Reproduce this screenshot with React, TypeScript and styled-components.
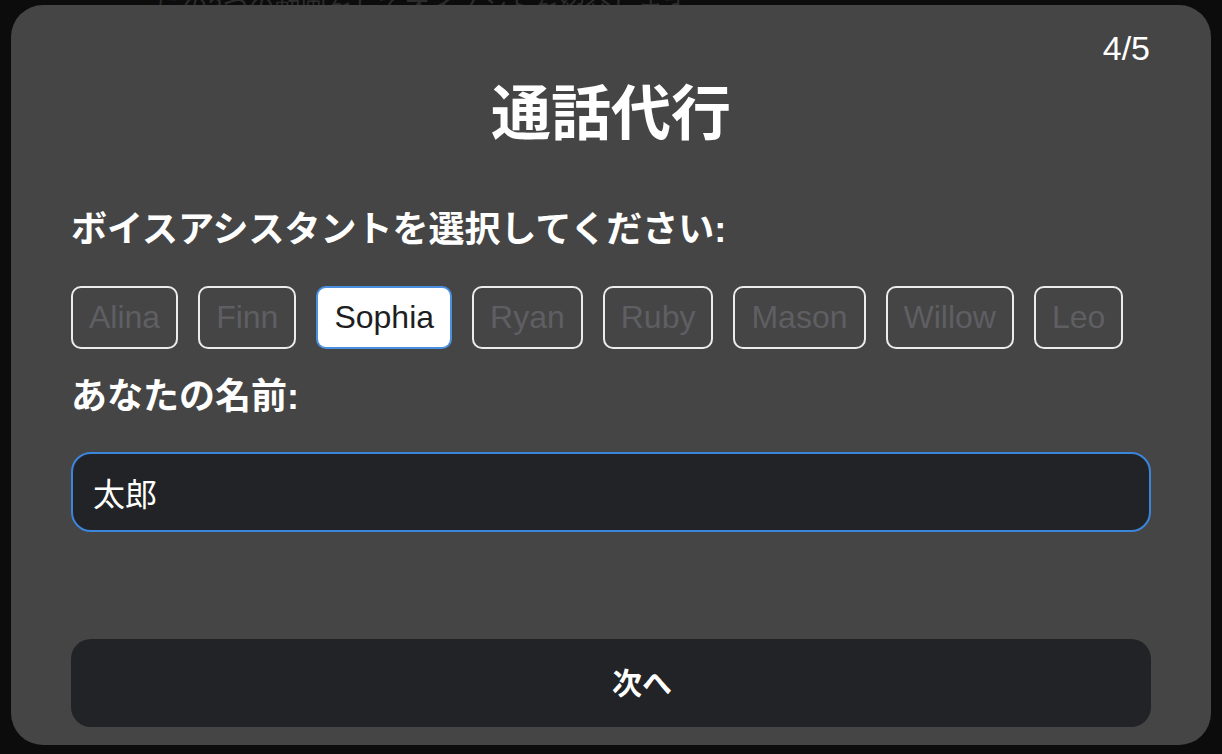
import React, { useState } from 'react';
import styled, { createGlobalStyle } from 'styled-components';

const GlobalStyle = createGlobalStyle`
  html, body {
    margin: 0;
    padding: 0;
    background: #0c0c0c;
  }
  * {
    box-sizing: border-box;
  }
`;

const fontStack = `"Liberation Sans", "Noto Sans CJK JP", sans-serif`;

const Page = styled.div`
  position: relative;
  width: 1222px;
  height: 754px;
  overflow: hidden;
  background: #0c0c0c;
  font-family: ${fontStack};
`;

// faint text of the page behind the dialog
const BackdropText = styled.div`
  position: absolute;
  top: -14px;
  left: 130px;
  font-size: 26px;
  color: #2c2c2c;
  white-space: nowrap;
`;

const Modal = styled.div`
  position: absolute;
  top: 5px;
  left: 11px;
  width: 1200px;
  height: 740px;
  background: #454545;
  border-radius: 32px;
  padding: 75px 60px 18px;
  display: flex;
  flex-direction: column;
  color: #ffffff;
`;

const Counter = styled.div`
  position: absolute;
  top: 24px;
  right: 61px;
  font-size: 34px;
  line-height: 38px;
`;

const Title = styled.h1`
  margin: 0;
  font-size: 60px;
  line-height: 70px;
  font-weight: 700;
  text-align: center;
`;

const Label = styled.label<{ $gap: number }>`
  display: block;
  margin-top: ${({ $gap }) => $gap}px;
  font-size: 36px;
  line-height: 40px;
  font-weight: 700;
`;

const ChipRow = styled.div`
  display: flex;
  gap: 20px;
  margin-top: 36px;
`;

const Chip = styled.button<{ $active: boolean }>`
  font-family: ${fontStack};
  font-size: 32px;
  line-height: 37px;
  padding: 11px 16px;
  border-radius: 10px;
  border: 2px solid ${({ $active }) => ($active ? '#4a8fe0' : '#ececec')};
  background: ${({ $active }) => ($active ? '#ffffff' : 'transparent')};
  color: ${({ $active }) => ($active ? '#1e1e1e' : '#5f5f63')};
  cursor: pointer;
`;

const NameInput = styled.input`
  margin-top: 35px;
  height: 80px;
  width: 100%;
  padding: 0 20px;
  font-family: ${fontStack};
  font-size: 32px;
  color: #ffffff;
  background: #222326;
  border: 2px solid #3b86dc;
  border-radius: 20px;
  outline: none;
`;

const NextButton = styled.button`
  margin-top: auto;
  height: 88px;
  width: 100%;
  padding: 0 0 4px 62px;
  border: none;
  border-radius: 20px;
  background: #222326;
  color: #ffffff;
  font-family: ${fontStack};
  font-size: 30px;
  font-weight: 700;
  cursor: pointer;
`;

const voices = ['Alina', 'Finn', 'Sophia', 'Ryan', 'Ruby', 'Mason', 'Willow', 'Leo'];

export default function App() {
  const [voice, setVoice] = useState('Sophia');
  const [name, setName] = useState('太郎');

  return (
    <Page>
      <GlobalStyle />
      <BackdropText>こにの3つの動画をしてオイスントを紹介します</BackdropText>
      <Modal>
        <Counter>4/5</Counter>
        <Title>通話代行</Title>
        <Label $gap={60}>ボイスアシスタントを選択してください:</Label>
        <ChipRow>
          {voices.map(v => (
            <Chip key={v} $active={v === voice} onClick={() => setVoice(v)}>
              {v}
            </Chip>
          ))}
        </ChipRow>
        <Label $gap={28}>あなたの名前:</Label>
        <NameInput value={name} onChange={e => setName(e.target.value)} />
        <NextButton>次へ</NextButton>
      </Modal>
    </Page>
  );
}
